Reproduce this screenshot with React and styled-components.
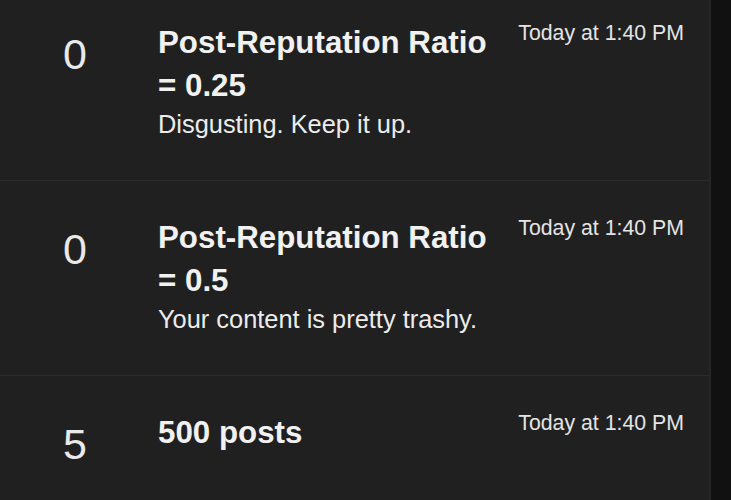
import React from "react";
import styled, { createGlobalStyle } from "styled-components";

const Global = createGlobalStyle`
  html, body {
    margin: 0;
    padding: 0;
    background: #131313;
    overflow: hidden;
  }
  body {
    font-family: "Liberation Sans", Arial, Helvetica, sans-serif;
  }
`;

const Screen = styled.div`
  display: flex;
  width: 731px;
  height: 500px;
  overflow: hidden;
  background: linear-gradient(to right, #171717, #111111);
`;

const Panel = styled.div`
  width: 709px;
  flex: none;
  background: #202020;
  border-right: 2px solid #262626;
  overflow: hidden;
`;

const List = styled.div`
  margin-top: -14px;
  display: flex;
  flex-direction: column;
`;

const Row = styled.div`
  display: flex;
  align-items: flex-start;
  padding: 35px 25px 40px 0;
  border-bottom: 1px solid #2b2b2b;
  min-height: 118px;
`;

const Count = styled.div`
  width: 150px;
  flex: none;
  margin-top: 8px;
  text-align: center;
  font-size: 43px;
  line-height: 50px;
  font-weight: 400;
  color: #e9e9e9;
`;

const Body = styled.div`
  flex: 1;
  min-width: 0;
  margin-left: 8px;
  margin-right: 18px;
  display: flex;
  flex-direction: column;
`;

const Title = styled.div`
  font-size: 31.3px;
  line-height: 43px;
  font-weight: 700;
  color: #f1f1f1;
`;

const Desc = styled.div`
  margin-top: 1px;
  font-size: 25.4px;
  line-height: 32px;
  color: #ececec;
`;

const Time = styled.div`
  flex: none;
  font-size: 21.3px;
  line-height: 24px;
  color: #e4e4e4;
  white-space: nowrap;
`;

const items = [
  { count: 0, title: "Post-Reputation Ratio = 0.25", desc: "Disgusting. Keep it up." },
  { count: 0, title: "Post-Reputation Ratio = 0.5", desc: "Your content is pretty trashy." },
  { count: 5, title: "500 posts", desc: "" },
];

export default function App() {
  return (
    <>
      <Global />
      <Screen>
        <Panel>
          <List>
            {items.map((it, i) => (
              <Row key={i}>
                <Count>{it.count}</Count>
                <Body>
                  <Title>{it.title}</Title>
                  {it.desc && <Desc>{it.desc}</Desc>}
                </Body>
                <Time>Today at 1:40 PM</Time>
              </Row>
            ))}
          </List>
        </Panel>
      </Screen>
    </>
  );
}
